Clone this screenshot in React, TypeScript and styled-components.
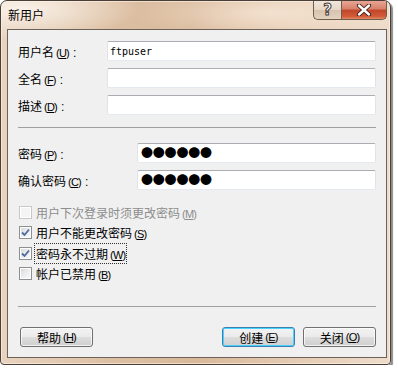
import React from 'react';
import styled, { createGlobalStyle, css } from 'styled-components';

const GlobalStyle = createGlobalStyle`
    body {
        margin: 0;
        background: #ffffff;
        font-family: "Noto Sans CJK SC", "Noto Sans", sans-serif;
        font-size: 12px;
        color: #000;
    }
`;

type MnemonicLabelProps = {
    text: string,
    letter: string,
    colon?: boolean,
}

function MnemonicLabel({ text, letter, colon }: MnemonicLabelProps) {
    return (
        <>
            {text}
            <Mnemonic>(<u>{letter}</u>)</Mnemonic>
            {colon && <Colon>:</Colon>}
        </>
    );
}

type CheckProps = {
    checked?: boolean,
    disabled?: boolean,
    focused?: boolean,
    text: string,
    letter: string,
}

function CheckRow({ checked, disabled, focused, text, letter }: CheckProps) {
    return (
        <CheckLine $disabled={disabled}>
            <Box $disabled={disabled}>
                {checked && (
                    <svg width="9" height="9" viewBox="0 0 9 9">
                        <path d="M1 4.5 L3.5 7 L8 1.5" fill="none" stroke="#4f6a9e" strokeWidth="1.8" />
                    </svg>
                )}
            </Box>
            <CheckText $focused={focused}>
                <MnemonicLabel text={text} letter={letter} />
            </CheckText>
        </CheckLine>
    );
}

function App() {
    return (
        <>
            <GlobalStyle />
            <Window>
                <TitleBar>
                    <Title>新用户</Title>
                    <Controls>
                        <CaptionButton $variant="help">
                            <HelpGlyph>?</HelpGlyph>
                        </CaptionButton>
                        <CaptionButton $variant="close">
                            <svg width="16" height="12" viewBox="0 0 16 12">
                                <path d="M3 1.5 L13 10.5 M13 1.5 L3 10.5" stroke="#3b1a12" strokeWidth="4.2" strokeLinecap="round" />
                                <path d="M3 1.5 L13 10.5 M13 1.5 L3 10.5" stroke="#ffffff" strokeWidth="2.4" strokeLinecap="round" />
                            </svg>
                        </CaptionButton>
                    </Controls>
                </TitleBar>
                <Client>
                    <FieldGrid $labelWidth={89}>
                        <Label><MnemonicLabel text="用户名" letter="U" colon /></Label>
                        <Input><Mono>ftpuser</Mono></Input>
                        <Label><MnemonicLabel text="全名" letter="F" colon /></Label>
                        <Input />
                        <Label><MnemonicLabel text="描述" letter="D" colon /></Label>
                        <Input />
                    </FieldGrid>
                    <Separator $top={12} $bottom={15} />
                    <FieldGrid $labelWidth={119}>
                        <Label><MnemonicLabel text="密码" letter="P" colon /></Label>
                        <Input><Dots>●●●●●●</Dots></Input>
                        <Label><MnemonicLabel text="确认密码" letter="C" colon /></Label>
                        <Input><Dots>●●●●●●</Dots></Input>
                    </FieldGrid>
                    <CheckList>
                        <CheckRow disabled text="用户下次登录时须更改密码" letter="M" />
                        <CheckRow checked text="用户不能更改密码" letter="S" />
                        <CheckRow checked focused text="密码永不过期" letter="W" />
                        <CheckRow text="帐户已禁用" letter="B" />
                    </CheckList>
                    <Separator $top={22} $bottom={20} />
                    <ButtonRow>
                        <Button><MnemonicLabel text="帮助" letter="H" /></Button>
                        <Spacer />
                        <Button $default><MnemonicLabel text="创建" letter="E" /></Button>
                        <Button><MnemonicLabel text="关闭" letter="O" /></Button>
                    </ButtonRow>
                </Client>
            </Window>
        </>
    );
}

const Window = styled.div`
    box-sizing: border-box;
    width: 391px;
    height: 365px;
    display: flex;
    flex-direction: column;
    padding: 0 3px 6px 6px;
    border: 1px solid #4a3f36;
    border-radius: 7px 7px 4px 4px;
    background:
        radial-gradient(ellipse 120px 30px at 20px 8px, rgba(255, 250, 244, 0.8), rgba(255, 250, 244, 0) 100%),
        radial-gradient(ellipse 140px 28px at 270px 12px, rgba(250, 236, 222, 0.7), rgba(250, 236, 222, 0) 100%),
        linear-gradient(90deg, #e8d3bf 0%, #dcbfa2 30%, #d8b899 50%, #e2c7ad 70%, #eedccb 100%);
    box-shadow: 2px 2px 1px rgba(0, 0, 0, 0.45), inset 0 0 0 1px rgba(255, 245, 235, 0.6);
`;

const TitleBar = styled.div`
    height: 28px;
    display: flex;
    justify-content: space-between;
    align-items: flex-start;
`;

const Title = styled.div`
    line-height: 28px;
    padding-left: 1px;
    font-size: 12px;
    color: #000;
`;

const Controls = styled.div`
    display: flex;
`;

const CaptionButton = styled.div<{ $variant: 'help' | 'close' }>`
    box-sizing: border-box;
    height: 19px;
    display: flex;
    align-items: center;
    justify-content: center;
    border: 1px solid #6f5d4d;
    border-top: none;
    ${({ $variant }) => $variant === 'help' ? css`
        width: 28px;
        border-right: none;
        border-radius: 0 0 0 5px;
        background: linear-gradient(180deg, #f1e6dc 0%, #e6d6c6 50%, #d8c2ad 51%, #e4d2c0 100%);
    ` : css`
        width: 46px;
        border-radius: 0 0 5px 0;
        background: linear-gradient(180deg, #e8a695 0%, #d7806a 45%, #c0452a 50%, #d25a38 85%, #e28a62 100%);
    `}
`;

const HelpGlyph = styled.span`
    font-family: "DejaVu Sans", sans-serif;
    font-weight: bold;
    font-size: 15px;
    line-height: 1;
    color: #ffffff;
    -webkit-text-stroke: 1px #4a4036;
`;

const Client = styled.div`
    flex: 1;
    display: flex;
    flex-direction: column;
    padding: 11px 10px 0 10px;
    border: 1px solid #6d6259;
    background: #f0f0f0;
`;

const FieldGrid = styled.div<{ $labelWidth: number }>`
    display: grid;
    grid-template-columns: ${({ $labelWidth }) => $labelWidth}px 1fr;
    row-gap: 7px;
    align-items: center;
`;

const Label = styled.div`
    font-size: 12px;
    white-space: nowrap;
`;

const Mnemonic = styled.span`
    margin-left: 2px;
    font-family: "Liberation Sans", sans-serif;
    font-size: 11px;
    letter-spacing: -0.8px;
`;

const Colon = styled.span`
    margin-left: 4px;
    font-family: "Liberation Sans", sans-serif;
`;

const Input = styled.div`
    box-sizing: border-box;
    height: 20px;
    display: flex;
    align-items: center;
    padding-left: 2px;
    background: #ffffff;
    border: 1px solid #e2e3ea;
    border-top-color: #abadb3;
    border-bottom-color: #e3e9ef;
    border-radius: 2px;
`;

const Mono = styled.span`
    font-family: "DejaVu Sans Mono", "Liberation Mono", monospace;
    font-size: 10px;
`;

const Dots = styled.span`
    padding-left: 1px;
    font-size: 12px;
    line-height: 1;
    letter-spacing: -0.2px;
`;

const Separator = styled.div<{ $top: number, $bottom: number }>`
    height: 1px;
    margin: ${({ $top, $bottom }) => `${$top}px 0 ${$bottom}px`};
    background: #a0a0a0;
`;

const CheckList = styled.div`
    margin-top: 12px;
    display: flex;
    flex-direction: column;
`;

const CheckLine = styled.div<{ $disabled?: boolean }>`
    height: 20.5px;
    display: flex;
    align-items: center;
    padding-left: 1px;
    color: ${({ $disabled }) => $disabled ? '#8d8d8d' : '#000'};
`;

const Box = styled.div<{ $disabled?: boolean }>`
    box-sizing: border-box;
    width: 13px;
    height: 13px;
    display: flex;
    align-items: center;
    justify-content: center;
    border: 1px solid ${({ $disabled }) => $disabled ? '#c8c8c8' : '#8e8f8f'};
    box-shadow: inset 0 0 0 1px #ffffff;
    background: ${({ $disabled }) => $disabled
        ? '#f4f4f4'
        : 'linear-gradient(135deg, #d4d6da 0%, #eceef0 55%, #fbfbfb 100%)'};
`;

const CheckText = styled.span<{ $focused?: boolean }>`
    margin-left: 2px;
    padding: 1px 1px;
    border: 1px dotted ${({ $focused }) => $focused ? '#333' : 'transparent'};
    white-space: nowrap;
`;

const ButtonRow = styled.div`
    display: flex;
    gap: 8px;
    padding-left: 2px;
`;

const Spacer = styled.div`
    flex: 1;
`;

const Button = styled.div<{ $default?: boolean }>`
    box-sizing: border-box;
    width: 73px;
    height: 20px;
    display: flex;
    align-items: center;
    justify-content: center;
    border: 1px solid ${({ $default }) => $default ? '#3c7fb1' : '#707070'};
    border-radius: 3px;
    background: linear-gradient(180deg, #f2f2f2 0%, #ebebeb 48%, #dddddd 52%, #cfcfcf 100%);
    box-shadow: ${({ $default }) => $default
        ? 'inset 0 0 0 1px #48d2fe'
        : 'inset 0 0 0 1px rgba(255, 255, 255, 0.7)'};
    font-size: 12px;
    white-space: nowrap;
`;

export default App;
